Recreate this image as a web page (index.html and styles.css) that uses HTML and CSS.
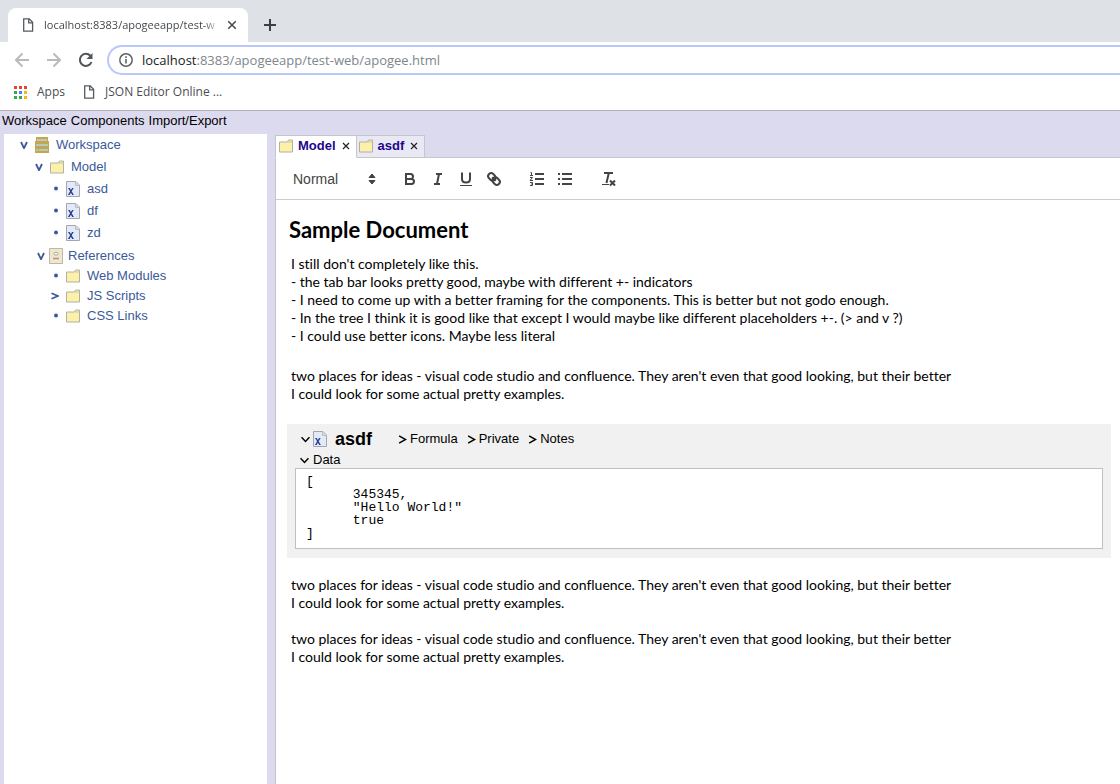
FILE: index.html
```html
<!DOCTYPE html>
<html lang="en">
<head>
<meta charset="utf-8">
<title>Apogee</title>
<link rel="stylesheet" href="styles.css">
</head>
<body>
<svg class="defs" width="0" height="0" aria-hidden="true">
  <symbol id="i-page" viewBox="0 0 12 14"><path d="M1.700 .9h5.500l3.400 3.400v8.800H1.700z M6.700 .9v3.900h3.900" fill="none" stroke="#555a5f" stroke-width="1.300"/></symbol>
  <symbol id="i-folder" viewBox="0 0 14 13"><path d="M.5 2.500h8l1-2h4v12H.5z" fill="#fdf0a8" stroke="#b0b0a8"/><path d="M9 2.500h4.500" stroke="#c9c6a6"/></symbol>
  <symbol id="i-data" viewBox="0 0 14 16"><path d="M.5.5h9.500l3.500 3.500v11.500H.5z" fill="#e2eafa" stroke="#a3a6ac"/><path d="M9.500.5v4h4" fill="#d5d8d8" stroke="#bcbfc2"/><path d="M2 7h1.700l1.200 2 1.200-2h1.600l-2 3.300L7.900 14H6.200L4.900 11.800 3.600 14H1.900l2.200-3.700z" fill="#27408c"/></symbol>
  <symbol id="i-space" viewBox="0 0 14 16"><path d="M1 0h12v4h1v12H0V4h1z" fill="#c3a64d"/><path d="M2 3h10M1 8h12M4 13h9M1 13h2" stroke="#b5cbc0" stroke-width="2"/></symbol>
  <symbol id="i-refs" viewBox="0 0 14 16"><path d="M.5.5h13v15H.5z" fill="#f2e6c6" stroke="#b7b7b3"/><rect x="5" y="4.500" width="4" height="2.500" rx="1" fill="#fff" stroke="#aaa"/><path d="M4 10.500h6" stroke="#999" stroke-width="1.500"/></symbol>
  <symbol id="i-down" viewBox="0 0 8 8"><path d="M1 1 4 7.200 7 1" fill="none" stroke="currentColor" stroke-width="1.800"/></symbol>
  <symbol id="i-right" viewBox="0 0 8 8"><path d="M.5 1.200 7 4 .5 6.800" fill="none" stroke="currentColor" stroke-width="1.700"/></symbol>
  <symbol id="i-chev-d" viewBox="0 0 8 8"><path d="M.5 2 4 5.700 7.500 2" fill="none" stroke="currentColor" stroke-width="1.300"/></symbol>
  <symbol id="i-chev-r" viewBox="0 0 8 8"><path d="M1 .8 6.800 4 1 7.200" fill="none" stroke="currentColor" stroke-width="1.300"/></symbol>
  <symbol id="i-dot" viewBox="0 0 8 8"><circle cx="5" cy="3.500" r="2" fill="currentColor"/></symbol>
  <symbol id="i-x" viewBox="0 0 8 8"><path d="M1 1l6 6M7 1 1 7" stroke="currentColor" stroke-width="1.200"/></symbol>
</svg>

<header class="browser">
  <div class="tabstrip">
    <div class="btab">
      <svg class="page-icon"><use href="#i-page"/></svg>
      <span class="btab-title">localhost:8383/apogeeapp/test-w</span>
      <button class="plain btab-close" aria-label="Close tab"><svg width="10" height="10" viewBox="0 0 8 8"><use href="#i-x"/></svg></button>
    </div>
    <button class="plain newtab" aria-label="New tab"><svg width="12" height="12"><path d="M6 0v12M0 6h12" stroke="#3c4043" stroke-width="2"/></svg></button>
  </div>
  <div class="navbar">
    <button class="plain nav" aria-label="Back"><svg width="16" height="16"><path d="M15 8H2M8.500 1.500 2 8l6.500 6.500" fill="none" stroke="#b8babd" stroke-width="2"/></svg></button>
    <button class="plain nav" aria-label="Forward"><svg width="16" height="16"><path d="M1 8h13M7.500 1.500 14 8l-6.500 6.500" fill="none" stroke="#b8babd" stroke-width="2"/></svg></button>
    <button class="plain nav" aria-label="Reload"><svg width="16" height="16"><path d="M13.500 10A6 6 0 1 1 12.300 3.800" fill="none" stroke="#50555a" stroke-width="2"/><path d="M14.500 1v6H8.500z" fill="#50555a"/></svg></button>
    <div class="address">
      <svg width="14" height="14"><circle cx="7" cy="7" r="6.200" fill="none" stroke="#5f6368" stroke-width="1.500"/><path d="M7 6v4.500M7 3.300v1.600" stroke="#5f6368" stroke-width="1.600"/></svg>
      <a class="url" href="#"><span>localhost</span>:8383/apogeeapp/test-web/apogee.html</a>
    </div>
  </div>
  <nav class="bookmarks">
    <a href="#"><svg width="13" height="13"><g fill="#ea4335"><path d="M0 0h3v3H0zM5 0h3v3H5zM10 0h3v3h-3z"/></g><g fill="#34a853"><path d="M0 5h3v3H0zM0 10h3v3H0z"/></g><path d="M5 5h3v3H5z" fill="#4285f4"/><path d="M5 10h3v3H5z" fill="#34a853"/><path d="M10 5h3v3h-3zM10 10h3v3h-3z" fill="#f5b811"/></svg>Apps</a>
    <a href="#"><svg class="page-icon"><use href="#i-page"/></svg>JSON Editor Online ...</a>
  </nav>
</header>

<nav class="menubar">
  <button class="plain">Workspace</button>
  <button class="plain">Components</button>
  <button class="plain">Import/Export</button>
</nav>

<div class="app">
  <aside class="tree">
    <div class="row"><svg class="twisty"><use href="#i-down"/></svg><svg class="icon"><use href="#i-space"/></svg><a href="#">Workspace</a></div>
    <div class="row l1"><svg class="twisty"><use href="#i-down"/></svg><svg class="icon"><use href="#i-folder"/></svg><a href="#">Model</a></div>
    <div class="row l2"><svg class="twisty"><use href="#i-dot"/></svg><svg class="icon"><use href="#i-data"/></svg><a href="#">asd</a></div>
    <div class="row l2"><svg class="twisty"><use href="#i-dot"/></svg><svg class="icon"><use href="#i-data"/></svg><a href="#">df</a></div>
    <div class="row l2"><svg class="twisty"><use href="#i-dot"/></svg><svg class="icon"><use href="#i-data"/></svg><a href="#">zd</a></div>
    <div class="row refs"><svg class="twisty"><use href="#i-down"/></svg><svg class="icon"><use href="#i-refs"/></svg><a href="#">References</a></div>
    <div class="row l2 short"><svg class="twisty"><use href="#i-dot"/></svg><svg class="icon"><use href="#i-folder"/></svg><a href="#">Web Modules</a></div>
    <div class="row l2 short"><svg class="twisty"><use href="#i-right"/></svg><svg class="icon"><use href="#i-folder"/></svg><a href="#">JS Scripts</a></div>
    <div class="row l2 short"><svg class="twisty"><use href="#i-dot"/></svg><svg class="icon"><use href="#i-folder"/></svg><a href="#">CSS Links</a></div>
  </aside>

  <main class="work">
    <div class="tabs">
      <div class="tab active"><svg class="icon"><use href="#i-folder"/></svg><a href="#">Model</a><button class="plain" aria-label="Close Model"><svg width="8" height="8"><use href="#i-x"/></svg></button></div>
      <div class="tab"><svg class="icon"><use href="#i-folder"/></svg><a href="#">asdf</a><button class="plain" aria-label="Close asdf"><svg width="8" height="8"><use href="#i-x"/></svg></button></div>
    </div>
    <div class="panel">
      <div class="toolbar">
        <label class="format"><select aria-label="Paragraph style"><option>Normal</option></select><svg width="8" height="12"><path d="M4 1 7 4.500H1zM4 11 1 7.500h6z" fill="#444" stroke="#444" stroke-linejoin="round"/></svg></label>
        <div class="group">
          <button class="plain" aria-label="Bold"><svg viewBox="0 0 18 18"><path class="s" d="M5 4h4.500a2.500 2.500 0 0 1 0 5H5zM5 9h5.500a2.500 2.500 0 0 1 0 5H5z"/></svg></button>
          <button class="plain" aria-label="Italic"><svg viewBox="0 0 18 18"><path class="s" d="M7 4h6M5 14h6M8 14l2-10"/></svg></button>
          <button class="plain" aria-label="Underline"><svg viewBox="0 0 18 18"><path class="s" d="M5 2.500V9c0 2 1.500 3.500 4 3.500S13 11 13 9V2.500"/><path class="s thin" d="M3 15.500h12"/></svg></button>
          <button class="plain" aria-label="Link"><svg viewBox="0 0 18 18"><g transform="rotate(45 9 9)"><rect class="s" x="2" y="6" width="8" height="6" rx="3"/><rect class="s" x="8" y="6" width="8" height="6" rx="3"/><path class="s" d="M6.500 9h5"/></g></svg></button>
        </div>
        <div class="group">
          <button class="plain" aria-label="Numbered list"><svg viewBox="0 0 18 18"><path class="s" d="M7 4h9M7 9h9M7 14h9"/><path class="s thin" d="M2.500 2.500h1v3M2 5.500h3M2 7.500h2.500L2 10.500h3M2 12.500h2.500v3H2M3 14h1.500"/></svg></button>
          <button class="plain" aria-label="Bulleted list"><svg viewBox="0 0 18 18"><path class="s" d="M6 4h10M6 9h10M6 14h10M2 4h2M2 9h2M2 14h2"/></svg></button>
        </div>
        <div class="group">
          <button class="plain" aria-label="Clear formatting"><svg viewBox="0 0 18 18"><path class="s" d="M5 3h9M7.500 13l2.300-10M11 10.500l5 5M16 10.500l-5 5"/><path class="s thin" d="M3 14.500h7"/></svg></button>
        </div>
      </div>

      <article class="doc">
        <h1>Sample Document</h1>
        <p>I still don't completely like this.<br>- the tab bar looks pretty good, maybe with different +- indicators<br>- I need to come up with a better framing for the components. This is better but not godo enough.<br>- In the tree I think it is good like that except I would maybe like different placeholders +-. (&gt; and v ?)<br>- I could use better icons. Maybe less literal</p>
        <p class="spaced">two places for ideas - visual code studio and confluence. They aren't even that good looking, but their better<br>I could look for some actual pretty examples.</p>

        <section class="component">
          <div class="comp-head">
            <button class="plain comp-name"><svg class="chev"><use href="#i-chev-d"/></svg><svg class="icon"><use href="#i-data"/></svg><strong>asdf</strong></button>
            <button class="plain view"><svg class="chev"><use href="#i-chev-r"/></svg>Formula</button>
            <button class="plain view"><svg class="chev"><use href="#i-chev-r"/></svg>Private</button>
            <button class="plain view"><svg class="chev"><use href="#i-chev-r"/></svg>Notes</button>
          </div>
          <button class="plain view data"><svg class="chev"><use href="#i-chev-d"/></svg>Data</button>
<pre class="code">[
      345345,
      "Hello World!"
      true
]</pre>
        </section>

        <p>two places for ideas - visual code studio and confluence. They aren't even that good looking, but their better<br>I could look for some actual pretty examples.</p>
        <p>two places for ideas - visual code studio and confluence. They aren't even that good looking, but their better<br>I could look for some actual pretty examples.</p>
      </article>
    </div>
  </main>
</div>
</body>
</html>
```
FILE: styles.css
```css
* { box-sizing: border-box; }
body {
  margin: 0;
  min-height: 100vh;
  display: flex;
  flex-direction: column;
  background: #dcdaee;
  font: 13px/18px "Liberation Sans", Arial, sans-serif;
  color: #000;
}
a { color: inherit; text-decoration: none; }
svg { display: block; flex: none; }
.defs { position: absolute; }
.plain {
  display: flex;
  align-items: center;
  margin: 0;
  padding: 0;
  border: 0;
  background: none;
  font: inherit;
  color: inherit;
}
.icon { width: 14px; height: 16px; }

/* Browser frame */
.browser { background: #fff; border-bottom: 1px solid #b3b0b5; font-family: "Open Sans", sans-serif; }
.page-icon { width: 12px; height: 14px; }
.tabstrip { display: flex; align-items: flex-end; height: 42px; padding-left: 8px; background: #dee1e6; }
.btab {
  display: flex;
  align-items: center;
  width: 240px;
  height: 34px;
  padding: 0 11px 0 14px;
  border-radius: 8px 8px 0 0;
  background: #fff;
  font-size: 11px;
  color: #45494d;
}
.btab-title {
  flex: 1;
  margin: 0 6px 0 10px;
  white-space: nowrap;
  mask-image: linear-gradient(to right, #000 90%, transparent);
}
.btab-close { color: #45494d; }
.newtab { height: 34px; margin-left: 16px; }
.navbar { display: flex; align-items: center; height: 36px; padding-left: 14px; gap: 16px; }
.address {
  flex: 1;
  display: flex;
  align-items: center;
  gap: 9px;
  height: 30px;
  margin-left: -3px;
  padding-left: 10px;
  border: 2px solid #b9c7fa;
  border-right: 0;
  border-radius: 15px 0 0 15px;
  font-size: 13px;
}
.url { color: #80868b; }
.url span { color: #202124; }
.bookmarks { display: flex; align-items: center; height: 32px; padding: 1px 14px 5px; gap: 18px; font-size: 12px; color: #4a4d51; }
.bookmarks a { display: flex; align-items: center; gap: 10px; }

.menubar { display: flex; gap: 4px; height: 23px; padding: 0 2px 3px; }

/* Workspace */
.app { flex: 1; display: flex; gap: 8px; padding-left: 4px; }
.tree { width: 263px; background: #fff; color: #3b5998; }
.row { display: flex; align-items: center; height: 22px; padding-left: 16px; }
.row a { margin-left: 7px; }
.twisty { width: 8px; height: 8px; margin-right: 7px; }
.l1 { padding-left: 31px; }
.l2 { padding-left: 47px; }
.refs { padding: 2px 0 0 33px; }
.refs .twisty { margin-right: 4px; }
.refs a { margin-left: 5px; }
.short { height: 20px; }

.work { flex: 1; display: flex; flex-direction: column; min-width: 0; padding-top: 1px; }
.tabs { position: relative; z-index: 1; display: flex; height: 23px; margin-bottom: -1px; }
.tab {
  display: flex;
  align-items: center;
  padding: 0 6px 2px 2px;
  border: 1px solid #c6c6ca;
  border-left: 0;
  background: #e9e8f5;
  font-weight: bold;
  color: #22068c;
}
.tab.active { padding-left: 3px; border-left: 1px solid #c6c6ca; border-bottom-color: #fff; background: #fff; }
.tab a { margin: 0 6px 0 5px; }
.tab button { color: #222; }
.panel { flex: 1; border: 1px solid #c6c6ca; border-width: 1px 0 0 1px; background: #fff; }
.toolbar { display: flex; align-items: center; height: 42px; padding-left: 17px; gap: 25px; border-bottom: 1px solid #ccc; }
.format { display: flex; align-items: center; justify-content: space-between; width: 83px; }
.format select { appearance: none; flex: 1; padding: 0; border: 0; background: none; font: inherit; font-size: 14px; color: #444; }
.group { display: flex; gap: 10px; }
.group svg { width: 18px; height: 18px; }
.s { fill: none; stroke: #444; stroke-width: 2; }
.thin { stroke-width: 1; }

.doc { padding: 16px 9px 16px 11px; font: 14px/18px "Lato", sans-serif; font-variant-ligatures: none; }
.doc h1 { margin: 0 2px 11px; font-size: 22px; line-height: 28px; }
.doc p { margin: 0 4px 18px; }
.doc .spaced { margin-top: 22px; margin-bottom: 21px; }
.component { margin-bottom: 18px; padding: 4px 8px 9px; background: #f1f1f1; font: 13px/18px "Liberation Sans", Arial, sans-serif; }
.comp-head { display: flex; align-items: center; gap: 9px; height: 22px; padding-left: 6px; }
.comp-name { gap: 3px; margin-right: 17px; }
.comp-name strong { margin-left: 5px; font-size: 18px; }
.chev { width: 9px; height: 9px; }
.view { gap: 3px; }
.data { height: 18px; margin-left: 5px; padding-top: 2px; gap: 4px; }
.code { margin: 0; padding: 6px 10px 8px; border: 1px solid #bfbfbf; background: #fff; font: 13px/13px "Liberation Mono", "Courier New", monospace; }
```
